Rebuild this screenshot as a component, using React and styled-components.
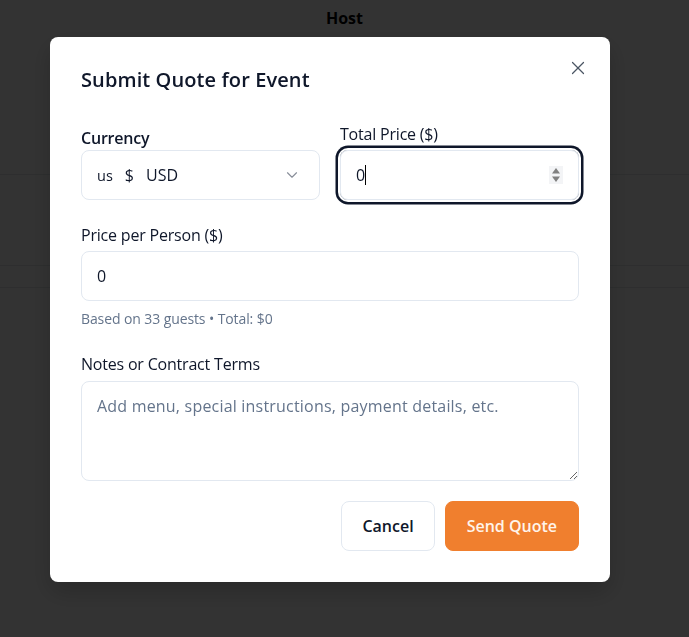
import React from "react";
import styled, { createGlobalStyle } from "styled-components";
import { X, ChevronDown } from "lucide-react";

const GlobalStyle = createGlobalStyle`
  * { box-sizing: border-box; }
  html, body { margin: 0; padding: 0; }
  body {
    font-family: "Open Sans", "Noto Sans", sans-serif;
    background: #ffffff;
    color: #0f172a;
  }
`;

const Page = styled.div`
  height: 637px;
  background: #ffffff;
  display: flex;
  flex-direction: column;
  overflow: hidden;
`;

const HostHeader = styled.div`
  text-align: center;
  font-weight: 700;
  font-size: 16px;
  line-height: 24px;
  padding-top: 6px;
  height: 174px;
  color: #000;
`;

const BgRow = styled.div`
  height: ${(p) => p.$h}px;
  border-top: 1px solid #e5e7eb;
`;

const Overlay = styled.div`
  position: fixed;
  inset: 0;
  background: rgba(0, 0, 0, 0.8);
`;

const Dialog = styled.div`
  position: fixed;
  left: 50px;
  top: 37px;
  width: 560px;
  background: #ffffff;
  border-radius: 8px;
  padding: 29px 31px 31px;
  box-shadow: 0 10px 25px rgba(0, 0, 0, 0.2);
  display: flex;
  flex-direction: column;
`;

const CloseButton = styled.button`
  position: absolute;
  right: 21px;
  top: 20px;
  width: 22px;
  height: 22px;
  padding: 0;
  border: none;
  background: transparent;
  color: #4b5563;
  display: flex;
  align-items: center;
  justify-content: center;
  cursor: pointer;
`;

const Title = styled.h2`
  margin: 0;
  font-size: 20px;
  line-height: 28px;
  font-weight: 600;
  color: #0f172a;
  letter-spacing: 0.1px;
`;

const TwoCols = styled.div`
  display: grid;
  grid-template-columns: 1fr 1fr;
  column-gap: 20px;
  align-items: end;
  margin-top: 28px;
`;

const Field = styled.div`
  display: flex;
  flex-direction: column;
  margin-top: ${(p) => p.$mt || 0}px;
`;

const Label = styled.label`
  font-size: 16px;
  line-height: 24px;
  font-weight: ${(p) => (p.$bold ? 600 : 400)};
  color: #0f172a;
  margin-bottom: ${(p) => p.$mb ?? 4}px;
  letter-spacing: -0.2px;
`;

const SelectBox = styled.div`
  height: 50px;
  border: 1px solid #e2e8f0;
  border-radius: 8px;
  display: flex;
  align-items: center;
  padding: 0 18px 0 15px;
  font-size: 16px;
  color: #0f172a;
`;

const Flag = styled.span`
  font-size: 14.5px;
  margin-right: 12px;
`;

const Currency = styled.span`
  flex: 1;
  word-spacing: 8px;
`;

const Chevron = styled(ChevronDown)`
  color: #6b7280;
  opacity: 0.8;
`;

const FocusBox = styled.div`
  height: 50px;
  border: 1px solid #e2e8f0;
  border-radius: 8px;
  display: flex;
  align-items: center;
  padding: 0 15px 0 15px;
  font-size: 16px;
  box-shadow: 0 0 0 2px #ffffff, 0 0 0 4.5px #0f172a;
`;

const Value = styled.span`
  color: #0f172a;
`;

const Caret = styled.span`
  width: 1px;
  height: 20px;
  background: #000;
  flex: 1 0 auto;
  max-width: 1px;
`;

const Grow = styled.span`
  flex: 1;
`;

const Spinner = styled.span`
  width: 14px;
  height: 18px;
  background: #f3f4f6;
  display: flex;
  align-items: center;
  justify-content: center;
`;

const TextInput = styled.input`
  height: 50px;
  border: 1px solid #e2e8f0;
  border-radius: 8px;
  padding: 0 15px;
  font-family: inherit;
  font-size: 16px;
  color: #0f172a;
  outline: none;
  background: #fff;
`;

const Helper = styled.p`
  margin: 8px 0 0;
  font-size: 14px;
  line-height: 20px;
  color: #64748b;
  letter-spacing: -0.1px;
`;

const TextArea = styled.textarea`
  height: 100px;
  border: 1px solid #e2e8f0;
  border-radius: 8px;
  padding: 12px 15px;
  font-family: inherit;
  font-size: 16px;
  line-height: 24px;
  color: #0f172a;
  outline: none;
  resize: vertical;
  letter-spacing: 0.2px;
  &::placeholder {
    color: #64748b;
    opacity: 1;
  }
`;

const Footer = styled.div`
  display: flex;
  justify-content: flex-end;
  gap: 10px;
  margin-top: 20px;
`;

const Button = styled.button`
  height: 50px;
  padding: 0 ${(p) => (p.$primary ? 21 : 20)}px;
  border-radius: 8px;
  font-family: inherit;
  font-size: 16px;
  font-weight: 600;
  cursor: pointer;
  border: 1px solid ${(p) => (p.$primary ? "#f07f2e" : "#e2e8f0")};
  background: ${(p) => (p.$primary ? "#f07f2e" : "#ffffff")};
  color: ${(p) => (p.$primary ? "#fff4ea" : "#0f172a")};
`;

export default function App() {
  return (
    <>
      <GlobalStyle />
      <Page>
        <HostHeader>Host</HostHeader>
        <BgRow $h={91} />
        <BgRow $h={22} />
        <BgRow $h={200} />
      </Page>
      <Overlay />
      <Dialog role="dialog">
        <CloseButton aria-label="Close">
          <X size={22} strokeWidth={1.3} />
        </CloseButton>
        <Title>Submit Quote for Event</Title>
        <TwoCols>
          <Field>
            <Label $bold $mb={0}>Currency</Label>
            <SelectBox>
              <Flag>us</Flag>
              <Currency>$ USD</Currency>
              <Chevron size={18} strokeWidth={1.5} />
            </SelectBox>
          </Field>
          <Field>
            <Label $mb={4}>Total Price ($)</Label>
            <FocusBox>
              <Value>0</Value>
              <Caret />
              <Grow />
              <Spinner>
                <svg width="10" height="16" viewBox="0 0 10 16">
                  <path d="M5 1 L9 6.5 H1 Z" fill="#808080" />
                  <path d="M5 15 L9 9.5 H1 Z" fill="#808080" />
                </svg>
              </Spinner>
            </FocusBox>
          </Field>
        </TwoCols>
        <Field $mt={23}>
          <Label>Price per Person ($)</Label>
          <TextInput defaultValue="0" />
          <Helper>Based on 33 guests • Total: $0</Helper>
        </Field>
        <Field $mt={23}>
          <Label $mb={5}>Notes or Contract Terms</Label>
          <TextArea placeholder="Add menu, special instructions, payment details, etc." />
        </Field>
        <Footer>
          <Button>Cancel</Button>
          <Button $primary>Send Quote</Button>
        </Footer>
      </Dialog>
    </>
  );
}
